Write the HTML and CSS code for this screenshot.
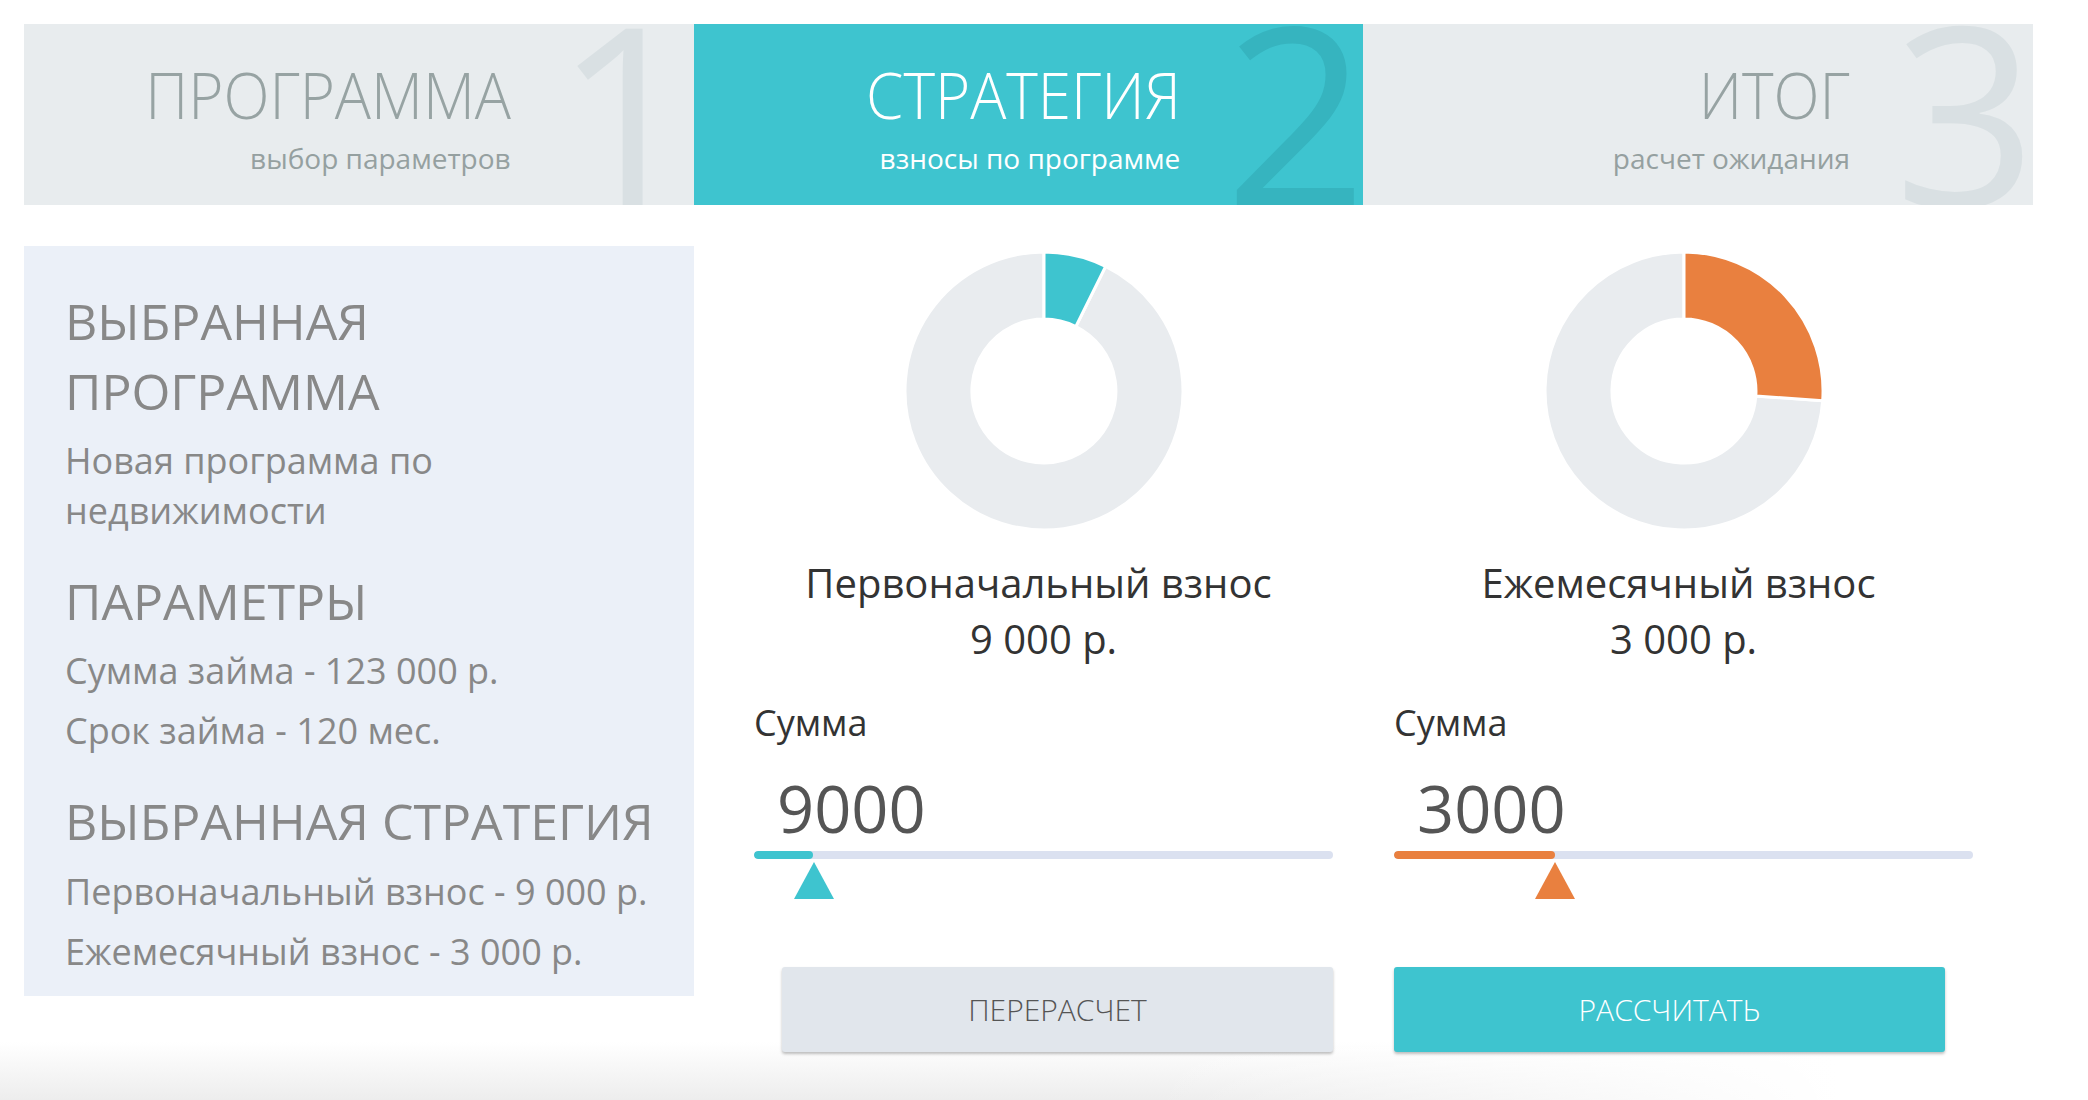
FILE: index.html
```html
<!DOCTYPE html>
<html lang="ru">
<head>
<meta charset="utf-8">
<title>Стратегия</title>
<link rel="stylesheet" href="styles.css">
</head>
<body>
<div class="page">
  <nav class="steps">
    <div class="step">
      <div class="step-text">
        <div class="step-title">ПРОГРАММА</div>
        <div class="step-sub">выбор параметров</div>
      </div>
      <span class="step-num">1</span>
    </div>
    <div class="step step-active">
      <div class="step-text">
        <div class="step-title">СТРАТЕГИЯ</div>
        <div class="step-sub">взносы по программе</div>
      </div>
      <span class="step-num">2</span>
    </div>
    <div class="step">
      <div class="step-text">
        <div class="step-title">ИТОГ</div>
        <div class="step-sub">расчет ожидания</div>
      </div>
      <span class="step-num">3</span>
    </div>
  </nav>

  <main class="content">
    <aside class="summary">
      <h2 class="sum-h sum-h-first">ВЫБРАННАЯ<br>ПРОГРАММА</h2>
      <p class="sum-desc">Новая программа по<br>недвижимости</p>
      <h2 class="sum-h sum-h-params">ПАРАМЕТРЫ</h2>
      <p class="sum-item sum-item-first">Сумма займа - 123 000 р.</p>
      <p class="sum-item">Срок займа - 120 мес.</p>
      <h2 class="sum-h sum-h-strategy">ВЫБРАННАЯ СТРАТЕГИЯ</h2>
      <p class="sum-item sum-item-last">Первоначальный взнос - 9 000 р.</p>
      <p class="sum-item">Ежемесячный взнос - 3 000 р.</p>
    </aside>

    <section class="calc">
      <div class="calc-col calc-col-left">
        <svg class="donut" width="278" height="278" viewBox="0 0 278 278">
          <path class="seg-rest" d="M200.6,14.4 A139,139 0 1,1 139,0 L139,67 A72,72 0 1,0 170.9,74.5 Z"/>
          <path class="seg-teal" d="M139,0 A139,139 0 0,1 200.6,14.4 L170.9,74.5 A72,72 0 0,0 139,67 Z"/>
        </svg>
        <div class="calc-label">
          <div class="calc-name">Первоначальный взнос</div>
          <div class="calc-sum">9 000 р.</div>
        </div>
        <div class="field-label">Сумма</div>
        <div class="field-value">9000</div>
        <div class="slider">
          <div class="slider-track"><div class="slider-fill fill-teal" style="width:59px"></div></div>
          <span class="slider-thumb thumb-teal" style="left:40px"></span>
        </div>
        <button class="btn btn-gray">ПЕРЕРАСЧЕТ</button>
      </div>
      <div class="calc-col calc-col-right">
        <svg class="donut" width="278" height="278" viewBox="0 0 278 278">
          <path class="seg-rest" d="M277.7,148.7 A139,139 0 1,1 139,0 L139,67 A72,72 0 1,0 210.8,144 Z"/>
          <path class="seg-orange" d="M139,0 A139,139 0 0,1 277.7,148.7 L210.8,144 A72,72 0 0,0 139,67 Z"/>
        </svg>
        <div class="calc-label">
          <div class="calc-name">Ежемесячный взнос</div>
          <div class="calc-sum">3 000 р.</div>
        </div>
        <div class="field-label">Сумма</div>
        <div class="field-value">3000</div>
        <div class="slider">
          <div class="slider-track"><div class="slider-fill fill-orange" style="width:161px"></div></div>
          <span class="slider-thumb thumb-orange" style="left:141px"></span>
        </div>
        <button class="btn btn-teal">РАССЧИТАТЬ</button>
      </div>
    </section>
  </main>
</div>
</body>
</html>
```

FILE: styles.css
```css
* { box-sizing: border-box; }

html, body {
  margin: 0;
  padding: 0;
  background: #fff;
}

body {
  font-family: "Open Sans", "Noto Sans", "DejaVu Sans", sans-serif;
  min-height: 1100px;
  background-image:
    linear-gradient(to right, rgba(255,255,255,0) 55%, #fff 88%),
    linear-gradient(to bottom, rgba(238,238,238,0), #ededed);
  background-repeat: no-repeat;
  background-position: left bottom, left bottom;
  background-size: 100% 58px, 100% 58px;
}

.page {
  padding: 24px 55px 0 24px;
}

/* ---------- steps ---------- */
.steps {
  display: flex;
  height: 181px;
}

.step {
  flex: 1 1 0;
  position: relative;
  overflow: hidden;
  background: #e8ecee;
  display: flex;
  justify-content: flex-end;
  padding: 39px 183px 0 0;
}

.step-active {
  background: #3ec4cf;
}

.step-text {
  position: relative;
  z-index: 1;
  display: flex;
  flex-direction: column;
  align-items: flex-end;
}

.step-title {
  font-size: 64px;
  line-height: 64px;
  font-weight: 300;
  color: #97a3a3;
  white-space: nowrap;
  transform: scaleX(0.94);
  transform-origin: right center;
}

.step-sub {
  margin-top: 17px;
  font-size: 28px;
  line-height: 28px;
  font-weight: 400;
  color: #95a0a0;
  white-space: nowrap;
}

.step-active .step-title,
.step-active .step-sub {
  color: #fff;
}

.step-num {
  position: absolute;
  right: -4px;
  bottom: -30px;
  font-size: 250px;
  line-height: 250px;
  font-weight: 400;
  color: #d9e0e3;
}

.step-active .step-num {
  color: #36b4bf;
}

/* ---------- content ---------- */
.content {
  display: flex;
  margin-top: 41px;
  align-items: flex-start;
}

.summary {
  flex: 0 0 670px;
  background: #ebf0f8;
  padding: 40px 10px 14px 41px;
  color: #888;
}

.sum-h {
  margin: 0;
  font-size: 50px;
  line-height: 70px;
  font-weight: 400;
  white-space: nowrap;
}

.sum-h-params { margin-top: 30px; }
.sum-h-strategy { margin-top: 25px; }

.sum-desc {
  margin: 10px 0 0;
  font-size: 36px;
  line-height: 50px;
}

.sum-item {
  margin: 0;
  font-size: 36px;
  line-height: 60px;
  white-space: nowrap;
}

.sum-item-first { margin-top: 5px; }
.sum-item-last { margin-top: 6px; }

/* ---------- calculator ---------- */
.calc {
  flex: 1 1 auto;
  display: flex;
  gap: 61px;
  padding: 0 60px;
}

.calc-col {
  flex: 1 1 0;
  display: flex;
  flex-direction: column;
}

.donut {
  display: block;
  align-self: center;
  margin-top: 6px;
}

.donut path {
  stroke: #fff;
  stroke-width: 3;
}

.seg-rest { fill: #e9ecef; }
.seg-teal { fill: #3ec4cf; }
.seg-orange { fill: #e9803f; }

.calc-label {
  margin-top: 25px;
  text-align: center;
  font-size: 40px;
  line-height: 56px;
  color: #333;
}

.calc-name {
  padding-right: 10px;
}

.field-label {
  margin-top: 36px;
  font-size: 36px;
  line-height: 40px;
  color: #333;
}

.field-value {
  margin-top: 30px;
  padding-left: 23px;
  font-size: 65px;
  line-height: 70px;
  color: #555;
}

.slider {
  position: relative;
  margin-top: 8px;
  height: 48px;
}

.slider-track {
  height: 8px;
  border-radius: 4px;
  background: #dbe1f0;
  overflow: hidden;
}

.slider-fill {
  height: 8px;
  border-radius: 4px;
}

.fill-teal { background: #3ec4cf; }
.fill-orange { background: #e9803f; }

.slider-thumb {
  position: absolute;
  top: 11px;
  width: 0;
  height: 0;
  border-left: 20px solid transparent;
  border-right: 20px solid transparent;
  border-bottom: 37px solid #3ec4cf;
}

.thumb-orange { border-bottom-color: #e9803f; }

.btn {
  margin-top: 68px;
  width: 551px;
  height: 85px;
  border: none;
  border-radius: 3px;
  font-family: "Open Sans", "Noto Sans", sans-serif;
  font-size: 30px;
  font-weight: 300;
  box-shadow: 0 2px 3px rgba(0,0,0,0.25);
  cursor: pointer;
}

.btn-gray {
  align-self: flex-end;
  background: #e1e6ec;
  color: #555;
}

.btn-teal {
  align-self: flex-start;
  background: #3ec4cf;
  color: #fff;
}
```
